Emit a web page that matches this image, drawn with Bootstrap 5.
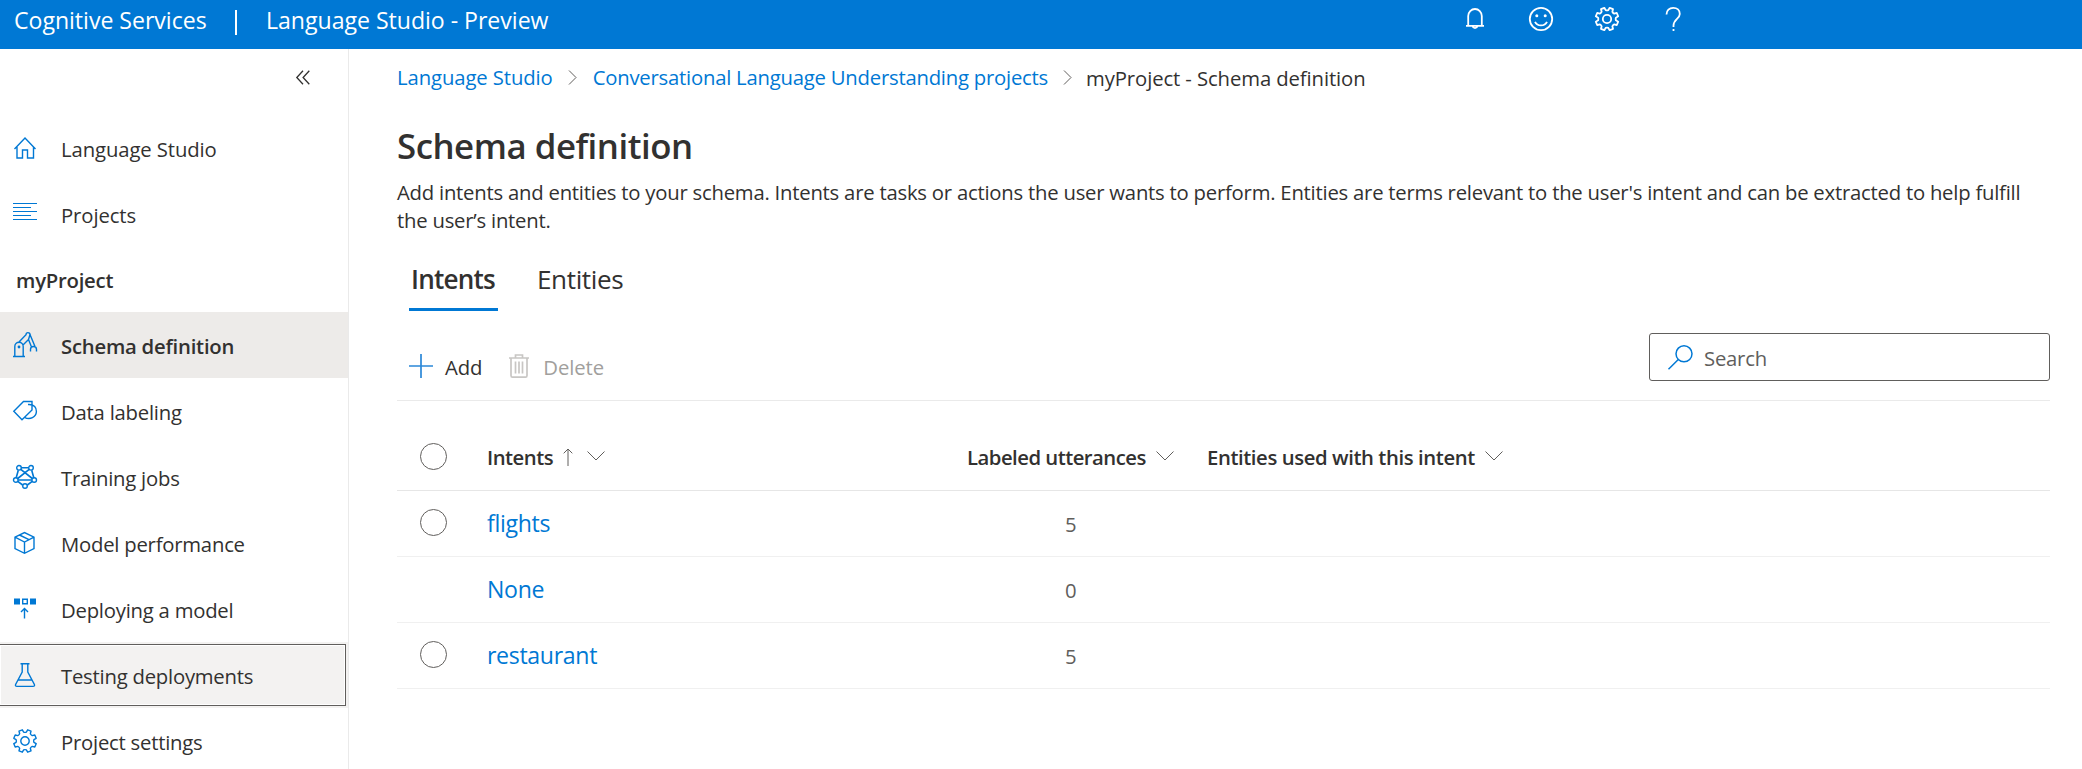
<!DOCTYPE html>
<html lang="en">
<head>
<meta charset="utf-8">
<meta name="viewport" content="width=device-width, initial-scale=1">
<title>Language Studio - Schema definition</title>
<link href="https://cdn.jsdelivr.net/npm/bootstrap@5.3.0/dist/css/bootstrap.min.css" rel="stylesheet">
<style>
  :root { --ls-blue: #0078d4; --ls-text: #323130; --ls-gray: #605e5c; }
  body { font-family: "Open Sans", "Noto Sans", sans-serif; font-size: 20.3px; letter-spacing: -.0111em; line-height: 28px; color: var(--ls-text); background: #fff; height: 769px; overflow: hidden; }
  a { color: var(--ls-blue); text-decoration: none; }
  svg { display: block; fill: none; stroke: currentColor; flex: none; overflow: visible; }

  .topbar { height: 49px; background: var(--ls-blue); color: #fff; font-size: 23.1px; letter-spacing: -.02px; padding: 0 397px 0 14px; }
  .topbar .navbar-text { color: #fff; line-height: 32px; padding: 0 0 9px; }
  .brand-one { width: 221px; }
  .brand-rule { width: 2px; height: 25px; background: #fff; margin: 0 29px 5px 0; }
  .top-icons { gap: 42px; padding-bottom: 11px; }
  .top-icons svg { width: 24px; height: 24px; stroke-width: 1.8; }

  .sidebar { width: 349px; border-right: 1px solid #eaeaea; height: 720px; flex: none; }
  .collapse-row { height: 65px; padding: 0 38px 8px 0; }
  .sidebar .nav-link { height: 66px; padding: 0 0 0 13px; gap: 24px; color: var(--ls-text); border-radius: 0; }
  .sidebar .nav-link span { padding-top: 2px; }
  .sidebar .nav-link.top-level span { padding-top: 4px; letter-spacing: -.1px; }
  .sidebar .nav-link svg { color: var(--ls-blue); width: 24px; height: 24px; stroke-width: 1.4; }
  .sidebar .nav-link.active { background: #edebe9; font-weight: 600; }
  .sidebar .nav-link.focused { background: #f3f2f1; width: 351px; margin-left: -3px; padding-left: 16px; outline: 1px solid var(--ls-gray); outline-offset: -3px; box-shadow: inset 0 0 0 3px #f3f2f1, inset 0 0 0 4px #fff; }
  .project-name { height: 66px; padding: 2px 0 0 16px; font-weight: 600; }

  .content { padding: 0 32px 0 48px; }
  .crumbs { height: 56px; }
  .crumbs .root, .crumbs .current { letter-spacing: -.1px; }
  .crumbs svg { width: 9px; height: 15px; color: var(--ls-gray); margin: 0 16px 0 15px; }
  .crumbs .current { padding-top: 2px; margin-left: -2px; }
  h1 { font-size: 34.8px; font-weight: 600; line-height: 52px; letter-spacing: -.0135em; margin: 15px 0 6px; }
  .desc { margin: 0 0 13px; height: 56px; }
  .pivot { height: 64px; font-size: 26.1px; padding-left: 12px; gap: 37px; letter-spacing: -.015em; }
  .pivot .nav-link { color: var(--ls-text); padding: 3px 2px 0; border: 0; border-bottom: 3px solid transparent; display: flex; align-items: center; }
  .pivot .nav-link.active { font-weight: 600; border-bottom-color: var(--ls-blue); width: 89px; white-space: nowrap; letter-spacing: -.03em; }
  .commands { height: 90px; border-bottom: 1px solid #eaeaea; padding: 22px 0 0 12px; }
  .commands .btn { font-size: inherit; letter-spacing: -.1px; line-height: 28px; padding: 0; border: 0; color: var(--ls-text); gap: 12px; margin: 18px 25px 0 0; }
  .commands .btn span { padding-top: 2px; }
  .commands .btn:disabled { color: #a19f9d; opacity: 1; }
  .search { width: 401px; height: 48px; border: 1px solid var(--ls-gray); border-radius: 3px; padding-left: 18px; gap: 11px; }
  .search input { border: 0; padding: 1px 0 0; font-size: inherit; letter-spacing: inherit; line-height: 28px; color: var(--ls-gray); box-shadow: none; }
  .search input::placeholder { color: var(--ls-gray); opacity: 1; }

  .grid-list { table-layout: fixed; margin: 0; color: var(--ls-text); --bs-table-bg: #fff; border-collapse: separate; border-spacing: 0; }
  .grid-list > :not(caption) > * > * { padding: 0; border-bottom: 1px solid #f0f0f0; height: 66px; vertical-align: middle; }
  .grid-list > thead > tr > th { height: 90px; padding-top: 22px; font-weight: 600; letter-spacing: -.025em; border-bottom-color: #e6e6e6; }
  .grid-list > thead > tr > th:last-child { letter-spacing: -.02em; }
  .grid-list th svg { color: var(--ls-gray); width: 18px; height: 10px; margin: 0 0 2px 10px; }
  .grid-list th svg.sort { width: 10px; height: 18px; margin: 0 4px 0 10px; }
  .grid-list .intent { font-size: 23.1px; letter-spacing: -.014em; padding-bottom: 1px; }
  .grid-list td.count { color: var(--ls-gray); padding: 1px 0 0 98px; }
  .ring { display: block; width: 27px; height: 27px; border: 1.500px solid var(--ls-gray); border-radius: 50%; margin: -2px 0 0 22.600px; }
  th .ring { margin-top: 0; }
</style>
</head>
<body>

<svg width="0" height="0" class="position-absolute" aria-hidden="true">
  <symbol id="gear" viewBox="-12 -12 24 24" overflow="visible">
    <path stroke-linejoin="round" d="M1.33-8.9 2.68-11.18 6.01-9.81 5.35-7.23Q6-5.9 7.23-5.35L9.81-6.01 11.18-2.68 8.9-1.33Q8.4 0 8.9 1.33L11.18 2.68 9.81 6.01 7.23 5.35Q5.9 5.9 5.35 7.23L6.01 9.81 2.68 11.18 1.33 8.9Q0 8.4-1.33 8.9L-2.68 11.18-6.01 9.81-5.35 7.23Q-5.9 5.9-7.23 5.35L-9.81 6.01-11.18 2.68-8.9 1.33Q-8.4 0-8.9-1.33L-11.18-2.68-9.81-6.01-7.23-5.35Q-5.9-5.9-5.35-7.23L-6.01-9.81-2.68-11.18-1.33-8.9Q0-8.4 1.33-8.9Z"/>
    <circle r="4.2"/>
  </symbol>
  <symbol id="chev-down" viewBox="0 0 18 10"><path d="M.5.5 9 9 17.5.5"/></symbol>
  <symbol id="chev-right" viewBox="0 0 9 15"><path d="M1 .5 8 7.5 1 14.5"/></symbol>
</svg>

<nav class="navbar topbar d-flex flex-nowrap align-items-center justify-content-start">
  <span class="navbar-text brand-one">Cognitive Services</span>
  <span class="brand-rule"></span>
  <span class="navbar-text">Language Studio - Preview</span>
  <div class="top-icons d-flex align-items-center ms-auto">
    <svg viewBox="0 0 24 24"><path d="M3 18.800H21M5.200 18.800V9A6.800 7 0 0 1 18.800 9V18.800M9.500 19A2.600 2.800 0 0 0 14.500 19"/></svg>
    <svg viewBox="0 0 24 24"><circle cx="12" cy="12" r="11.200"/><path d="M6 14.800A6.600 6.200 0 0 0 18 14.800"/><circle cx="7.800" cy="8.800" r="1.500" fill="currentColor" stroke="none"/><circle cx="16.200" cy="8.800" r="1.500" fill="currentColor" stroke="none"/></svg>
    <svg><use href="#gear"/></svg>
    <svg viewBox="0 0 24 24"><path d="M5.500 7.500C5.500 3.500 8.300.8 12.200.8S18.800 3.300 18.800 7C18.800 11.500 12.500 12.500 12.500 18.500V20M12.500 22V24"/></svg>
  </div>
</nav>

<div class="d-flex">
  <aside class="sidebar">
    <div class="collapse-row d-flex align-items-center justify-content-end">
      <svg width="14" height="15" viewBox="0 0 14 15" stroke-width="1.300"><path d="M7 .8.800 7.500 7 14.200M13.300.8 7.100 7.500 13.300 14.200"/></svg>
    </div>
    <nav class="nav flex-column flex-nowrap">
      <a class="nav-link top-level d-flex align-items-center" href="#">
        <svg viewBox="0 0 24 24"><path d="M1.500 14 12 3 22.500 14M4 12V23H9.500V15H14.500V23H20.500V12"/></svg><span>Language Studio</span></a>
      <a class="nav-link top-level d-flex align-items-center" href="#">
        <svg viewBox="0 0 24 24"><path stroke-width="1" d="M0 2.500H24M0 6.500H18M0 10.500H24M0 14.500H18M0 18.500H24"/></svg><span>Projects</span></a>
      <div class="project-name d-flex align-items-center">myProject</div>
      <a class="nav-link active d-flex align-items-center" href="#">
        <svg viewBox="0 0 24 24"><path d="M0 23.500H12M1.800 23.500V13.500A4.200 4.300 0 0 1 10.200 13.500V23.500M5 10 13 1.700A2 2 0 0 1 17 1.500L22 13.500M10 12 15.500 6.500 18.500 14M17.500 18.500V16.500A3 3 0 0 1 23.500 16.500V18.500M15.500 6.500 17 1.500"/><circle cx="6" cy="14" r="1.400" fill="currentColor" stroke="none"/></svg><span>Schema definition</span></a>
      <a class="nav-link d-flex align-items-center" href="#">
        <svg viewBox="0 0 24 24"><path d="M.8 12.300 10.500 2.500H19V11L9 20.700ZM15 5.500C21.500 5 23.500 9 23.400 12.500C23.200 18 17 21.500 11.500 18.300"/></svg><span>Data labeling</span></a>
      <a class="nav-link d-flex align-items-center" href="#">
        <svg viewBox="0 0 24 24"><path stroke-width="1.600" d="M8.300 2.800H15.700M5.300 5.200 3.200 12.700M18.700 5.200 20.800 12.700M7.800 4.400 19.300 13.500M16.200 4.400 4.700 13.500M5.200 15H18.800M4.800 16.300 9.600 20M19.200 16.300 14.400 20"/><circle cx="6" cy="2.800" r="2.300"/><circle cx="18" cy="2.800" r="2.300"/><circle cx="2.800" cy="15" r="2.300"/><circle cx="21.200" cy="15" r="2.300"/><circle cx="12" cy="21" r="2.300"/></svg><span>Training jobs</span></a>
      <a class="nav-link d-flex align-items-center" href="#">
        <svg viewBox="0 0 24 24"><path d="M2 6.200 11.500 1.500 21 6.200V17.500L11.500 22.300 2 17.500ZM2 6.200 11.500 11 21 6.200M11.500 11V22.300M6.500 4 16 8.700"/></svg><span>Model performance</span></a>
      <a class="nav-link d-flex align-items-center" href="#">
        <svg viewBox="0 0 24 24"><path fill="currentColor" stroke="none" d="M1 1.500H7V7.500H1ZM17 1.500H23V7.500H17Z"/><path d="M9.700 2.200H14.300V6.800H9.700ZM11.500 21.500V11.500M8 15 11.500 11.500 15 15"/></svg><span>Deploying a model</span></a>
      <a class="nav-link focused d-flex align-items-center" href="#">
        <svg viewBox="0 0 24 24"><path d="M7.500.7H16.500M9.200.7V9L2.600 21.500Q2 23.400 4 23.400H20Q22 23.400 21.400 21.500L14.800 9V.7M5.300 17H18.700"/></svg><span>Testing deployments</span></a>
      <a class="nav-link d-flex align-items-center" href="#">
        <svg><use href="#gear"/></svg><span>Project settings</span></a>
    </nav>
  </aside>

  <main class="content flex-grow-1">
    <div class="crumbs d-flex align-items-center">
      <a class="root" href="#">Language Studio</a><svg><use href="#chev-right"/></svg><a href="#">Conversational Language Understanding projects</a><svg><use href="#chev-right"/></svg><span class="current">myProject - Schema definition</span>
    </div>
    <h1>Schema definition</h1>
    <p class="desc">Add intents and entities to your schema. Intents are tasks or actions the user wants to perform. Entities are terms relevant to the user's intent and can be extracted to help fulfill the user’s intent.</p>

    <div class="nav pivot flex-nowrap">
      <a class="nav-link active" href="#">Intents</a>
      <a class="nav-link" href="#">Entities</a>
    </div>

    <div class="commands d-flex align-items-start">
      <button class="btn d-flex align-items-center" type="button"><svg width="24" height="24" viewBox="0 0 24 24" stroke-width="1.700" color="#2b88d8"><path d="M0 12H24M12 0V24"/></svg><span>Add</span></button>
      <button class="btn d-flex align-items-center" type="button" disabled><svg width="24" height="24" viewBox="0 0 24 24" stroke-width="1.700" color="#c8c6c4"><path d="M2 4H22M8.500 4V1H15.500V4M4 4V21.500Q4 23.200 5.500 23.200H18.500Q20 23.200 20 21.500V4M8.500 7.500V19.500M12 7.500V19.500M15.500 7.500V19.500"/></svg><span>Delete</span></button>
      <div class="search d-flex align-items-center ms-auto">
        <svg width="25" height="25" viewBox="0 0 25 25" stroke-width="1.500" color="#0078d4"><circle cx="16" cy="8.800" r="8"/><path d="M10.300 14.500.5 24.300"/></svg>
        <input class="form-control bg-transparent" type="text" placeholder="Search" aria-label="Search">
      </div>
    </div>

    <table class="table grid-list">
      <colgroup><col style="width:90px"><col style="width:480px"><col style="width:240px"><col></colgroup>
      <thead>
        <tr>
          <th><span class="ring"></span></th>
          <th><div class="d-flex align-items-center">Intents<svg class="sort" viewBox="0 0 10 18"><path d="M5 18V1M.7 5.300 5 1 9.300 5.300"/></svg><svg><use href="#chev-down"/></svg></div></th>
          <th><div class="d-flex align-items-center">Labeled utterances<svg><use href="#chev-down"/></svg></div></th>
          <th><div class="d-flex align-items-center">Entities used with this intent<svg><use href="#chev-down"/></svg></div></th>
        </tr>
      </thead>
      <tbody>
        <tr><td><span class="ring"></span></td><td class="intent"><a href="#">flights</a></td><td class="count">5</td><td></td></tr>
        <tr><td></td><td class="intent"><a href="#">None</a></td><td class="count">0</td><td></td></tr>
        <tr><td><span class="ring"></span></td><td class="intent"><a href="#">restaurant</a></td><td class="count">5</td><td></td></tr>
      </tbody>
    </table>
  </main>
</div>

<script src="https://cdn.jsdelivr.net/npm/bootstrap@5.3.0/dist/js/bootstrap.bundle.min.js"></script>
</body>
</html>
